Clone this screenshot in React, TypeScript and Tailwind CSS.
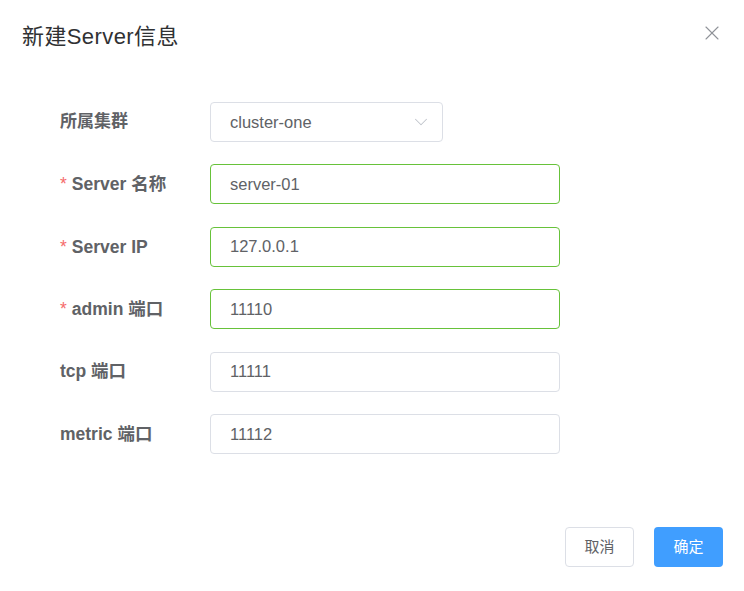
import { ChevronDown, X } from "lucide-react"

const rows = [
  { label: "Server 名称", value: "server-01", required: true },
  { label: "Server IP", value: "127.0.0.1", required: true },
  { label: "admin 端口", value: "11110", required: true },
  { label: "tcp 端口", value: "11111", required: false },
  { label: "metric 端口", value: "11112", required: false },
]

const font = { fontFamily: '"Liberation Sans", "Noto Sans CJK SC", sans-serif' }

export default function App() {
  return (
    <div className="h-[591px] w-[744px] bg-white flex flex-col" style={font}>
      {/* Header */}
      <div className="flex items-start justify-between pl-[22px] pr-[20px] pt-[21px] h-[102px]">
        <span className="text-[22px] leading-[32px] text-[#303133] tracking-[0.4px]">新建Server信息</span>
        <X className="h-[24px] w-[24px] text-[#909399] mt-[0px]" strokeWidth={1.1} />
      </div>

      {/* Form */}
      <div className="flex flex-col gap-[22.4px] pl-[60px]">
        <div className="flex items-center h-10">
          <label className="w-[150px] text-[17px] font-bold text-[#606266]">所属集群</label>
          <div className="w-[233px] h-10 border border-[#dcdfe6] rounded-[4px] flex items-center justify-between pl-[19px] pr-[10px]">
            <span className="text-[16.5px] text-[#606266]">cluster-one</span>
            <ChevronDown className="h-[22px] w-[22px] text-[#c0c4cc]" strokeWidth={1.1} />
          </div>
        </div>
        {rows.map((r) => (
          <div key={r.label} className="flex items-center h-10">
            <label className="w-[150px] text-[17.5px] font-bold text-[#606266]">
              {r.required && <span className="text-[#f56c6c] font-normal mr-[5px]">*</span>}
              {r.label}
            </label>
            <div
              className={
                r.required
                  ? "w-[350px] h-10 border border-[#67c23a] rounded-[4px] flex items-center pl-[19px]"
                  : "w-[350px] h-10 border border-[#dcdfe6] rounded-[4px] flex items-center pl-[19px]"
              }
            >
              <span className="text-[16.5px] text-[#606266]">{r.value}</span>
            </div>
          </div>
        ))}
      </div>

      {/* Footer */}
      <div className="mt-auto flex justify-end gap-5 pr-[21px] pb-[24px]">
        <button className="w-[69px] h-10 border border-[#dcdfe6] rounded-[4px] bg-white text-[15px] text-[#606266]">
          取消
        </button>
        <button className="w-[69px] h-10 rounded-[4px] bg-[#409eff] text-[15px] text-white">确定</button>
      </div>
    </div>
  )
}
